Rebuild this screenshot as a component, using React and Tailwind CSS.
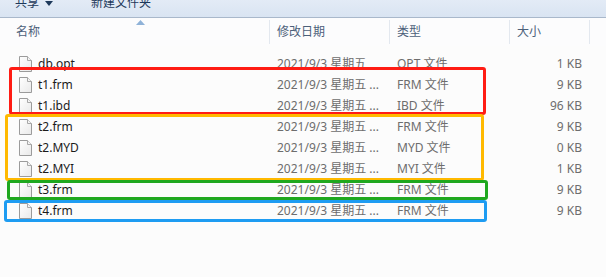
import React from "react";

const files = [
  { name: "db.opt", type: "OPT 文件", size: "1 KB", date: "2021/9/3 星期五" },
  { name: "t1.frm", type: "FRM 文件", size: "9 KB" },
  { name: "t1.ibd", type: "IBD 文件", size: "96 KB" },
  { name: "t2.frm", type: "FRM 文件", size: "9 KB" },
  { name: "t2.MYD", type: "MYD 文件", size: "0 KB" },
  { name: "t2.MYI", type: "MYI 文件", size: "1 KB" },
  { name: "t3.frm", type: "FRM 文件", size: "9 KB" },
  { name: "t4.frm", type: "FRM 文件", size: "9 KB" },
];

function FileIcon() {
  return (
    <svg width="13" height="16" viewBox="0 0 13 16" className="shrink-0">
      <defs>
        <linearGradient id="pg" x1="0" y1="0" x2="1" y2="1">
          <stop offset="0" stopColor="#ffffff" />
          <stop offset="1" stopColor="#e9e9e9" />
        </linearGradient>
      </defs>
      <path d="M0.5 0.5 H8.5 L12.5 4.5 V15.5 H0.5 Z" fill="url(#pg)" stroke="#9b9b9b" />
      <path d="M8.5 0.5 V4.5 H12.5" fill="#f4f4f4" stroke="#a8a8a8" />
    </svg>
  );
}

export default function App() {
  return (
    <div
      className="relative w-[606px] h-[277px] overflow-hidden bg-[#fcfcfc] text-[12px]"
      style={{ fontFamily: '"Noto Sans", "Noto Sans CJK SC", sans-serif' }}
    >
      {/* toolbar */}
      <div className="h-[18px] bg-gradient-to-b from-[#e3ebf6] to-[#d9e4f2] border-b border-[#a9b8cb] flex items-start overflow-hidden">
        <div className="flex items-center gap-[38px] pl-[15px] -mt-[5px] text-[#1e395b] leading-[16px]">
          <span className="flex items-center gap-[6px]">
            共享
            <svg width="8" height="5" viewBox="0 0 8 5">
              <path d="M0 0 H8 L4 5 Z" fill="#1e395b" />
            </svg>
          </span>
          <span>新建文件夹</span>
        </div>
      </div>

      {/* header */}
      <div className="relative h-[28px] grid grid-cols-[270px_120px_120px_80px_1fr] items-center text-[#4c607a] bg-[#fcfcfd]">
        <svg width="9" height="5" viewBox="0 0 9 5" className="absolute left-[136px] top-[2px]">
          <path d="M0 5 L4.5 0 L9 5 Z" fill="#8fb2d8" />
        </svg>
        <div className="pl-[16px] h-[24px] flex items-center border-r border-[#e3e8ef]">名称</div>
        <div className="pl-[7px] h-[24px] flex items-center border-r border-[#e3e8ef]">修改日期</div>
        <div className="pl-[7px] h-[24px] flex items-center border-r border-[#e3e8ef]">类型</div>
        <div className="pl-[7px] h-[24px] flex items-center border-r border-[#e3e8ef]">大小</div>
        <div />
      </div>

      {/* list */}
      <div className="pt-[7px]">
        {files.map((f) => (
          <div
            key={f.name}
            className="h-[21px] grid grid-cols-[270px_120px_120px_80px_1fr] items-center"
          >
            <div className="flex items-center gap-[6px] pl-[19px] text-[#1b1b1b]">
              <FileIcon />
              <span>{f.name}</span>
            </div>
            <div className="pl-[7px] text-[#6d6d6d] whitespace-nowrap">
              {f.date ? f.date : "2021/9/3 星期五 ..."}
            </div>
            <div className="pl-[7px] text-[#6d6d6d] whitespace-nowrap">{f.type}</div>
            <div className="pr-[8px] text-right text-[#6d6d6d]">{f.size}</div>
            <div />
          </div>
        ))}
      </div>

      {/* highlight boxes drawn over the list */}
      <div className="absolute left-[9px] top-[67px] w-[477px] h-[48px] border-[3px] border-[#ff1c14] rounded-[3px]" />
      <div className="absolute left-[5px] top-[114px] w-[479px] h-[67px] border-[3px] border-[#ffb900] rounded-[3px]" />
      <div className="absolute left-[7px] top-[180px] w-[481px] h-[20px] border-[3px] border-[#1fa81f] rounded-[3px]" />
      <div className="absolute left-[4px] top-[200px] w-[483px] h-[22px] border-[3px] border-[#1e9cf2] rounded-[3px]" />
    </div>
  );
}
